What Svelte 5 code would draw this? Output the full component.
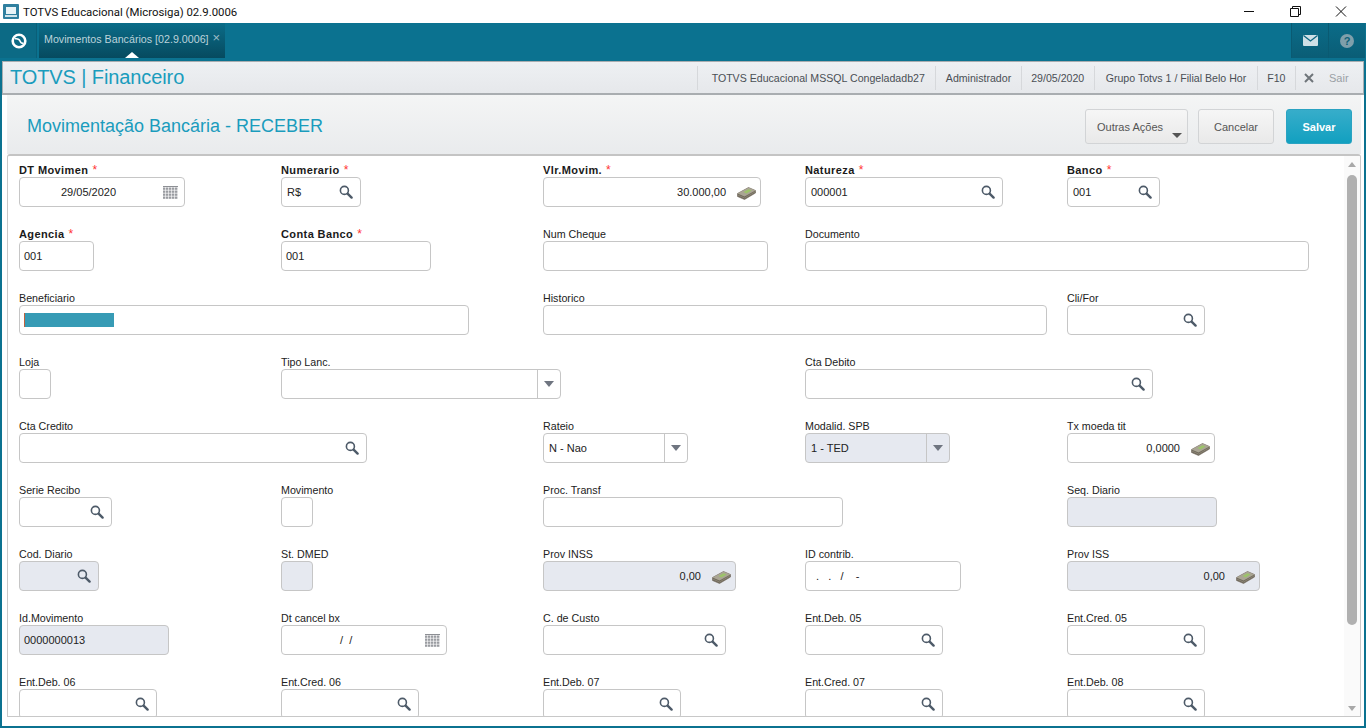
<script>
  const s = (l, w, extra = {}) => ({ l, w, icon: 'search', ...extra });
  const t = (l, w, extra = {}) => ({ l, w, ...extra });
  const rows = [
    [
      t('DT Movimen', 166, { req: true, icon: 'cal', v: '29/05/2020', date: true }),
      s('Numerario', 80, { req: true, v: 'R$' }),
      t('Vlr.Movim.', 218, { req: true, icon: 'money', v: '30.000,00', right: true }),
      s('Natureza', 198, { req: true, v: '000001' }),
      s('Banco', 93, { req: true, v: '001' })
    ],
    [
      t('Agencia', 75, { req: true, v: '001' }),
      t('Conta Banco', 150, { req: true, v: '001' }),
      t('Num Cheque', 225),
      t('Documento', 504),
      null
    ],
    [
      t('Beneficiario', 450, { masked: true }),
      null,
      t('Historico', 504),
      null,
      s('Cli/For', 138)
    ],
    [
      t('Loja', 32),
      t('Tipo Lanc.', 280, { icon: 'select' }),
      null,
      s('Cta Debito', 348),
      null
    ],
    [
      s('Cta Credito', 348),
      null,
      t('Rateio', 145, { icon: 'select', v: 'N - Nao' }),
      t('Modalid. SPB', 145, { icon: 'select', v: '1 - TED', ro: true }),
      t('Tx moeda tit', 148, { icon: 'money', v: '0,0000', right: true })
    ],
    [
      s('Serie Recibo', 93),
      t('Movimento', 32),
      t('Proc. Transf', 300),
      null,
      t('Seq. Diario', 150, { ro: true })
    ],
    [
      s('Cod. Diario', 80, { ro: true }),
      t('St. DMED', 32, { ro: true }),
      t('Prov INSS', 193, { icon: 'money', v: '0,00', right: true, ro: true }),
      t('ID contrib.', 156, { v: '.   .   /    -', idmask: true }),
      t('Prov ISS', 193, { icon: 'money', v: '0,00', right: true, ro: true })
    ],
    [
      t('Id.Movimento', 150, { v: '0000000013', ro: true }),
      t('Dt cancel bx', 166, { icon: 'cal', v: '/  /', cancel: true }),
      s('C. de Custo', 183),
      s('Ent.Deb. 05', 138),
      s('Ent.Cred. 05', 138)
    ],
    [
      s('Ent.Deb. 06', 138),
      s('Ent.Cred. 06', 138),
      s('Ent.Deb. 07', 138),
      s('Ent.Cred. 07', 138),
      s('Ent.Deb. 08', 138)
    ]
  ];
  const cells = rows.flat();
  const info = [
    { text: 'TOTVS Educacional MSSQL Congeladadb27', cls: 'first' },
    { text: 'Administrador', cls: '' },
    { text: '29/05/2020', cls: '' },
    { text: 'Grupo Totvs 1 / Filial Belo Hor', cls: 'wide' },
    { text: 'F10', cls: '' }
  ];
</script>

{#snippet searchIcon()}
  <svg class="ic" width="14" height="14" viewBox="0 0 14 14" aria-hidden="true">
    <circle cx="5.4" cy="5.4" r="4" fill="none" stroke="#4d5a68" stroke-width="1.6" />
    <path d="M8.6 8.6 L12.6 12.6" stroke="#4d5a68" stroke-width="2.4" stroke-linecap="round" />
  </svg>
{/snippet}

{#snippet calIcon()}
  <svg class="ic" width="15" height="13" viewBox="0 0 15 13" aria-hidden="true">
    <rect x="0" y="0" width="15" height="1" fill="#8d8f94" />
    {#each [1.5, 4.5, 7.5, 10.5] as y}
      {#each [0, 3, 6, 9, 12] as x}
        <rect {x} {y} width="2.4" height="2.3" fill="#9a9ca1" />
      {/each}
    {/each}
  </svg>
{/snippet}

{#snippet moneyIcon()}
  <svg class="ic" width="19" height="13" viewBox="0 0 19 13" aria-hidden="true">
    <path d="M0.5 6.5 L11.5 0.5 L18.5 3.5 L18.5 6 L7.5 12.5 L0.5 9.5 Z" fill="#6e675a" stroke="#6e675a" stroke-width="0.6" stroke-linejoin="round" />
    <path d="M0.5 6.5 L11.5 0.5 L18.5 3.5 L7.5 9.6 Z" fill="#aaa594" />
    <path d="M6.5 5 L11.5 2.2 L14.5 3.6 L9.5 6.5 Z" fill="#9cc46a" />
    <path d="M0.8 8 L7.5 11 L18.2 4.8" fill="none" stroke="#a09a88" stroke-width="0.6" />
  </svg>
{/snippet}

<div class="app">
  <header class="titlebar">
    <svg class="appicon" width="16" height="15" viewBox="0 0 16 15" aria-hidden="true">
      <rect width="16" height="15" rx="1" fill="#2f7f9f" />
      <rect x="3" y="3" width="10" height="7" fill="#e8f3f7" />
      <rect x="2" y="11" width="12" height="2" fill="#cfe3ea" />
    </svg>
    <span class="apptitle">TOTVS Educacional (Microsiga) 02.9.0006</span>
    <div class="winctl">
      <svg width="46" height="23" viewBox="0 0 46 23" aria-hidden="true"><path d="M18 11.5 H28" stroke="#111" /></svg>
      <svg width="46" height="23" viewBox="0 0 46 23" aria-hidden="true"><path d="M18.5 8.5 H26.5 V16.5 H18.5 Z M20.5 8.5 V6.5 H28.5 V14.5 H26.5" fill="none" stroke="#111" /></svg>
      <svg width="46" height="23" viewBox="0 0 46 23" aria-hidden="true"><path d="M18 6.5 L28 16.5 M28 6.5 L18 16.5" stroke="#111" /></svg>
    </div>
  </header>

  <nav class="topbar">
    <div class="logo">
      <svg width="18" height="18" viewBox="0 0 18 18" aria-hidden="true">
        <circle cx="9" cy="9" r="6.3" fill="none" stroke="#fff" stroke-width="2.6" />
        <path d="M5 6.8 Q9 6.2 10 9 Q10.8 11.4 13.4 11.4" fill="none" stroke="#fff" stroke-width="1.6" />
      </svg>
    </div>
    <div class="tab">
      <span class="tabname">Movimentos Bancários [02.9.0006]</span>
      <span class="tabx">×</span>
      <span class="tabarrow"></span>
    </div>
    <div class="topicons">
      <div class="topcell">
        <svg width="15" height="11" viewBox="0 0 15 11" aria-hidden="true">
          <rect width="15" height="11" rx="1" fill="#cfe0e6" />
          <path d="M0.5 0.5 L7.5 6 L14.5 0.5" fill="none" stroke="#0c6680" stroke-width="1.3" />
        </svg>
      </div>
      <div class="topcell">
        <span class="help">?</span>
      </div>
    </div>
  </nav>

  <div class="shell">
    <div class="modbar">
      <div class="brand">TOTVS | Financeiro</div>
      <div class="infos">
        {#each info as item}
          <span class="info {item.cls}">{item.text}</span>
        {/each}
        <span class="info exit">
          <svg width="10" height="10" viewBox="0 0 10 10" aria-hidden="true"><path d="M1 1 L9 9 M9 1 L1 9" stroke="#6f757a" stroke-width="2" /></svg>
          <i>Sair</i>
        </span>
      </div>
    </div>

    <div class="page">
      <div class="pagehead">
        <h1>Movimentação Bancária - RECEBER</h1>
        <div class="actions">
          <button class="btn more">Outras Ações<span class="caret"></span></button>
          <button class="btn cancel">Cancelar</button>
          <button class="btn save">Salvar</button>
        </div>
      </div>

      <section class="panel">
        <div class="form">
          {#each cells as c}
            {#if c}
              <div class="field">
                <div class="label" class:strong={c.req}>{c.l}{#if c.req}<span class="star">*</span>{/if}</div>
                <div class="input" class:ro={c.ro} style="width:{c.w}px">
                  {#if c.masked}<span class="mask"></span>{/if}
                  <span class="val" class:pick={c.icon === 'search' || c.icon === 'select'} class:right={c.right} class:date={c.date} class:cancel={c.cancel} class:idmask={c.idmask}>{c.v ?? ''}</span>
                  {#if c.icon === 'search'}
                    <span class="slot">{@render searchIcon()}</span>
                  {:else if c.icon === 'cal'}
                    <span class="slot cal">{@render calIcon()}</span>
                  {:else if c.icon === 'money'}
                    <span class="slot money">{@render moneyIcon()}</span>
                  {:else if c.icon === 'select'}
                    <span class="dd"><span class="ddarrow"></span></span>
                  {/if}
                </div>
              </div>
            {:else}
              <div></div>
            {/if}
          {/each}
        </div>
        <div class="scroll">
          <span class="arrow up"></span>
          <span class="thumb"></span>
          <span class="arrow down"></span>
        </div>
      </section>
    </div>
  </div>
</div>

<style>
  :global(body) { margin: 0; background: #0b7290; }
  .app { width: 1366px; height: 728px; display: flex; flex-direction: column; overflow: hidden; font-family: "Liberation Sans", Arial, sans-serif; color: #222; }

  .titlebar { height: 23px; flex: none; background: #fff; display: flex; align-items: center; padding-left: 3px; }
  .appicon { flex: none; }
  .apptitle { margin-left: 4px; font: 11.4px Roboto, "Noto Sans", sans-serif; color: #111; }
  .winctl { margin-left: auto; margin-right: 2px; display: flex; }

  .topbar { height: 38px; flex: none; background: #0b7290; display: flex; align-items: stretch; }
  .logo { width: 37px; height: 35px; flex: none; padding-left: 1px; background: #0c6a85; display: flex; align-items: center; justify-content: center; border-right: 1px solid #0a5f78; box-sizing: border-box; }
  .tab { position: relative; margin-left: 2px; width: 186px; height: 35px; box-sizing: border-box; padding: 9px 0 0 5px; background: linear-gradient(#0b6c88, #064a5f); display: flex; align-items: flex-start; color: #bcd3db; font-size: 10.7px; white-space: nowrap; }
  .tabname { line-height: 14px; }
  .tabx { margin-left: 4px; line-height: 12px; font-size: 13px; color: #9dbdc8; }
  .tabarrow { position: absolute; left: 86px; bottom: 0; width: 14px; height: 6px; background: #fff; clip-path: polygon(50% 0, 100% 100%, 0 100%); }
  .topicons { margin-left: auto; display: flex; padding-right: 1px; }
  .topcell { width: 37px; height: 35px; box-sizing: border-box; background: linear-gradient(#0b6c88, #0a5d76); border-left: 1px solid #0a5a72; display: flex; align-items: center; justify-content: center; }
  .help { width: 14px; height: 14px; border-radius: 50%; background: #7f9fab; color: #0c5f78; font: bold 11px/14px "Liberation Sans", sans-serif; text-align: center; }

  .shell { flex: 1; min-height: 0; margin: 0 2px 2px; display: flex; flex-direction: column; background: #fff; }
  .modbar { height: 34px; flex: none; box-sizing: border-box; background: linear-gradient(#eef0f3, #e6e8eb); border: 1px solid #a9adb0; border-width: 1px 1px 2px; display: flex; align-items: center; justify-content: space-between; padding-left: 7px; }
  .brand { font-size: 20px; letter-spacing: -0.1px; color: #1a9cbd; }
  .infos { display: flex; align-items: center; height: 24px; }
  .info { height: 24px; box-sizing: border-box; border-left: 1px solid #d6d8db; padding: 0 9.5px; font-size: 10.6px; line-height: 24px; color: #4a4f55; white-space: nowrap; }
  .info.first { padding: 0 10.5px 0 14px; }
  .info.wide { padding: 0 10.5px 0 11px; }
  .exit { display: flex; align-items: center; width: 68px; padding: 0 0 0 8px; }
  .exit svg { margin-right: 15px; flex: none; }
  .exit i { font-style: normal; font-size: 11px; color: #9aa0a5; }

  .page { flex: 1; min-height: 0; margin-left: 5px; margin-right: 3px; display: flex; flex-direction: column; padding-bottom: 9px; }
  .pagehead { height: 59px; flex: none; display: flex; align-items: flex-start; justify-content: space-between; background: linear-gradient(#f4f5f5, #e9ebed); padding-right: 9px; }
  h1 { margin: 20px 0 0 20px; font-weight: normal; font-size: 18px; line-height: 22px; color: #1a9cbd; }
  .actions { display: flex; margin-top: 14px; }
  .btn { height: 35px; box-sizing: border-box; border: 1px solid #d2d4d6; border-radius: 3px; background: linear-gradient(#f6f6f6, #e9e9e9); color: #555; font: 11px "Liberation Sans", sans-serif; padding: 0; position: relative; }
  .more { width: 103px; padding-right: 13px; margin-right: 10px; }
  .caret { position: absolute; right: 5px; bottom: 5px; border: 5px solid transparent; border-bottom: 0; border-top: 5px solid #555; }
  .cancel { width: 76px; margin-right: 12px; }
  .save { width: 66px; color: #fff; font-weight: bold; border-color: #2aa3c2; background: linear-gradient(#37adca, #12a0c0); }

  .panel { flex: 1; min-height: 0; display: flex; box-sizing: border-box; background: #fff; border: 1px solid #c8c8c8; border-top: 2px solid #c4c4c4; border-radius: 3px 3px 0 0; overflow: hidden; }
  .form { flex: 1; min-width: 0; padding: 8px 0 0 11px; display: grid; grid-template-columns: repeat(5, 262px); grid-auto-rows: 64px; overflow: hidden; }
  .field { min-width: 0; }
  .label { height: 13px; font-size: 10.7px; line-height: 13px; color: #222; white-space: nowrap; }
  .label.strong { font-size: 11px; font-weight: bold; color: #1a1a1a; letter-spacing: 0.4px; }
  .star { color: #f33; font-weight: normal; margin-left: 4px; font-size: 12px; }
  .input { position: relative; height: 30px; box-sizing: border-box; border: 1px solid #c6c6c6; border-radius: 4px; background: #fff; display: flex; align-items: center; font-size: 11px; color: #222; }
  .input.ro { background: #e6e9f0; }
  .val { flex: 1; padding-left: 4px; white-space: pre; }
  .val.pick { padding-left: 5px; }
  .val.right { text-align: right; padding-right: 34px; }
  .val.date { padding-left: 41px; }
  .val.cancel { padding-left: 58px; }
  .val.idmask { padding-left: 10px; }
  .slot { position: absolute; right: 7px; top: 7px; display: block; height: 14px; }
  .slot.cal { right: 6px; top: 8px; }
  .slot.money { right: 4px; top: 9px; }
  .ic { display: block; }
  .mask { position: absolute; left: 4px; top: 7px; width: 90px; height: 14px; box-sizing: border-box; background: #379bb5; border-left: 1px solid #c0623f; }
  .dd { position: absolute; right: 0; top: 0; bottom: 0; width: 23px; box-sizing: border-box; border-left: 1px solid #c6c6c6; display: flex; align-items: center; justify-content: center; }
  .ddarrow { border: 5px solid transparent; border-bottom: 0; border-top: 6px solid #6f7580; }

  .scroll { width: 16px; flex: none; background: #fafafa; position: relative; }
  .thumb { position: absolute; top: 19px; left: 3px; width: 10px; height: 450px; border-radius: 5px; background: #b0b0b0; }
  .arrow { position: absolute; left: 4px; border: 4px solid transparent; }
  .arrow.up { top: 6px; border-top: 0; border-bottom: 5px solid #a8a8a8; }
  .arrow.down { bottom: 5px; border-bottom: 0; border-top: 5px solid #a8a8a8; }
</style>
